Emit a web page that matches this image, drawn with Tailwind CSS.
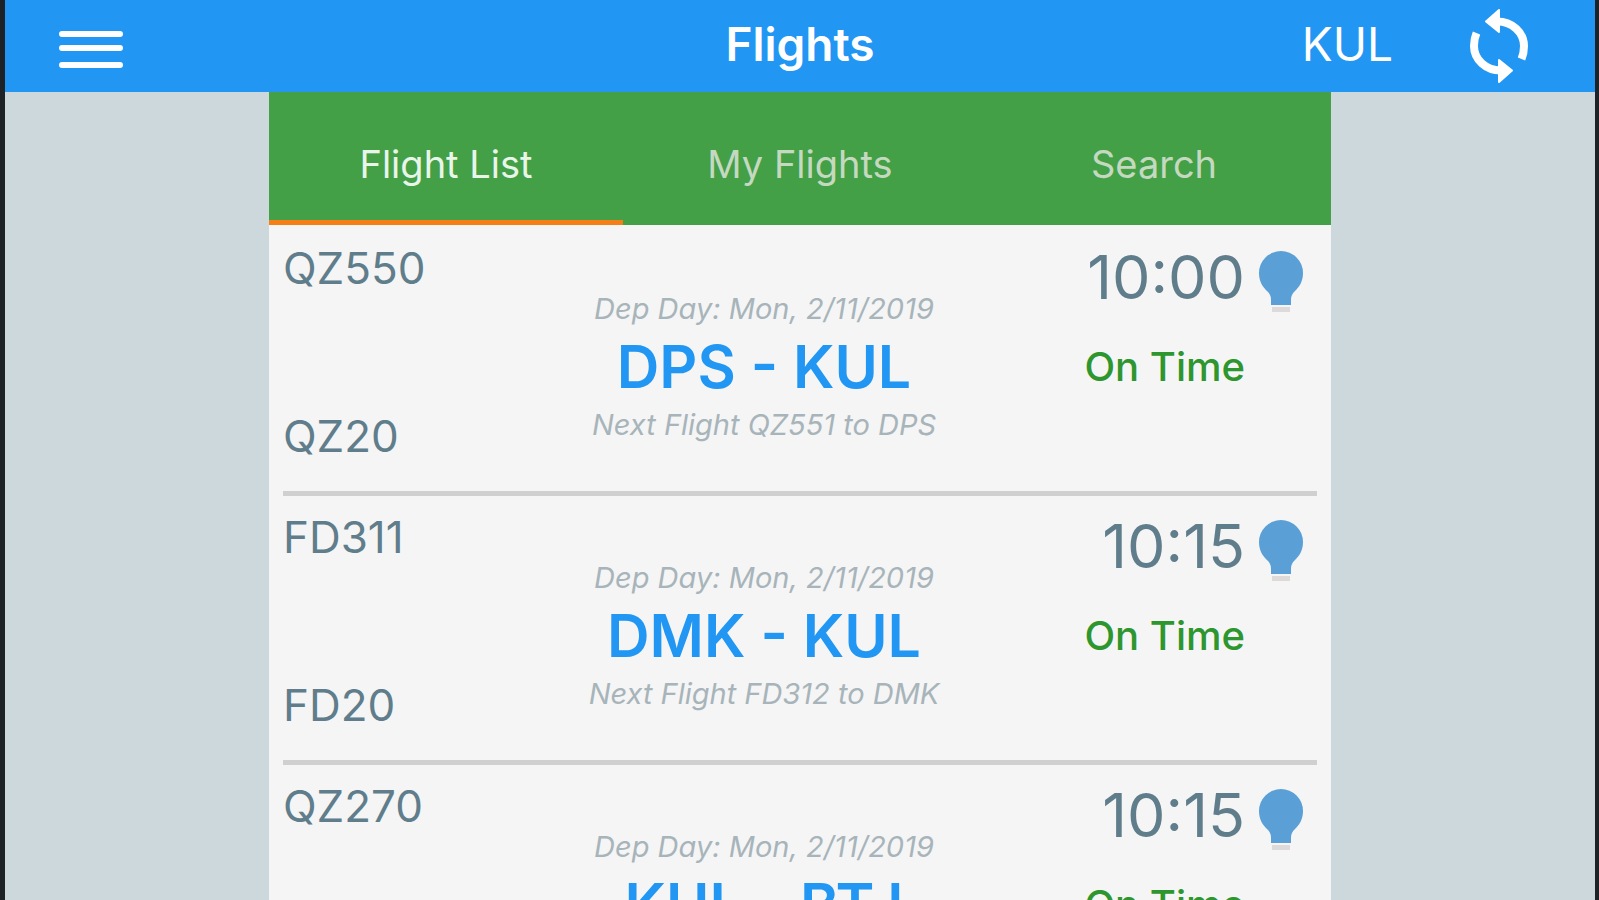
<!DOCTYPE html>
<html lang="en">
<head>
  <meta charset="UTF-8">
  <meta name="viewport" content="width=device-width, initial-scale=1">
  <title>Flights</title>
  <script src="https://cdn.jsdelivr.net/npm/@tailwindcss/browser@4"></script>
</head>
<body class="h-screen overflow-hidden flex flex-col bg-[#cdd8dd] border-l-5 border-r-4 border-[#1d2226] font-[Inter,sans-serif] text-[#607d8b]">
  <header class="h-[92px] shrink-0 grid grid-cols-[1fr_auto_1fr] items-center bg-[#2196f3] text-white px-[54px]">
    <button type="button" aria-label="Menu" class="justify-self-start pt-2">
      <svg class="block w-16 h-10" viewBox="0 0 64 40" fill="none" stroke="currentColor" stroke-width="6" stroke-linecap="round">
        <path d="M3 4h58M3 18h58M3 35h58"/>
      </svg>
    </button>
    <h1 class="pb-1 text-[46px] leading-none font-semibold">Flights</h1>
    <div class="justify-self-end flex items-center gap-[76px] pr-3">
      <span class="pb-1 text-[46px] leading-none">KUL</span>
      <button type="button" aria-label="Refresh">
        <svg class="block w-[60px] h-[76px]" viewBox="0 0 60 76">
          <g id="arrow">
            <path d="M27 13.500C43 13 55 24.500 55 38c0 5-1 9.500-2.500 13" fill="none" stroke="currentColor" stroke-width="8" stroke-linejoin="round"/>
            <path d="M17 13.500 30 2v22z" fill="currentColor" stroke="currentColor" stroke-width="2" stroke-linejoin="round"/>
          </g>
          <use href="#arrow" transform="rotate(180 30 38)"/>
        </svg>
      </button>
    </div>
  </header>

  <main class="w-[66.8%] mx-auto flex-1 bg-[#f5f5f5]">
    <nav class="h-[133px] grid grid-cols-3 bg-[#43a047] text-[38px] text-center text-[#c5d9c0]">
      <a href="#list" aria-current="page" class="flex items-center justify-center pt-5 pb-1 border-b-5 border-[#f57f17] text-[#eaf5ea]">Flight List</a>
      <a href="#my" class="flex items-center justify-center pt-5 pb-1 border-b-5 border-transparent">My Flights</a>
      <a href="#search" class="flex items-center justify-center pt-5 pb-1 border-b-5 border-transparent">Search</a>
    </nav>
    <ul id="flights" class="px-3.5 pt-0.5"></ul>
  </main>

  <script>
    const flights = [
      { number: 'QZ550', gate: 'QZ20', day: 'Mon, 2/11/2019', route: 'DPS - KUL', next: 'QZ551 to DPS', time: '10:00' },
      { number: 'FD311', gate: 'FD20', day: 'Mon, 2/11/2019', route: 'DMK - KUL', next: 'FD312 to DMK', time: '10:15' },
      { number: 'QZ270', gate: 'QZ20', day: 'Mon, 2/11/2019', route: 'KUL - BTJ', next: 'QZ271 to KUL', time: '10:15' },
    ];

    document.getElementById('flights').innerHTML = flights.map(f => `
      <li class="h-[269px] grid grid-cols-[185px_1fr_257px] border-b-5 border-[#d0d0d0]">
        <div class="flex flex-col justify-between pt-4 pb-[30px] text-[44px] leading-[50px]">
          <p>${f.number}</p>
          <p>${f.gate}</p>
        </div>
        <div class="pt-16 text-center">
          <p class="text-[29px] leading-9 italic text-[#a7b4ba]">Dep Day: ${f.day}</p>
          <h2 class="text-[59px] leading-20 font-semibold text-[#2196f3]">${f.route}</h2>
          <p class="text-[29px] leading-9 italic text-[#a7b4ba]">Next Flight ${f.next}</p>
        </div>
        <div class="flex justify-end gap-3.5 pr-3.5">
          <div class="pt-[15px] text-right">
            <p class="text-[61px] leading-[70px]">${f.time}</p>
            <p class="pt-[30px] text-[40px] leading-[50px] font-medium text-[#2e962e]">On Time</p>
          </div>
          <svg class="mt-6 w-11 h-[62px]" viewBox="0 0 44 62">
            <path fill="#5a9fd6" d="M22 0a22 22 0 0 0-22 22c0 9 4 14 8 18 3 3 4 5 4 9v5h20v-5c0-4 1-6 4-9 4-4 8-9 8-18A22 22 0 0 0 22 0z"/>
            <path fill="#dedada" d="M13 56h18v5H13z"/>
          </svg>
        </div>
      </li>`).join('');
  </script>
</body>
</html>
